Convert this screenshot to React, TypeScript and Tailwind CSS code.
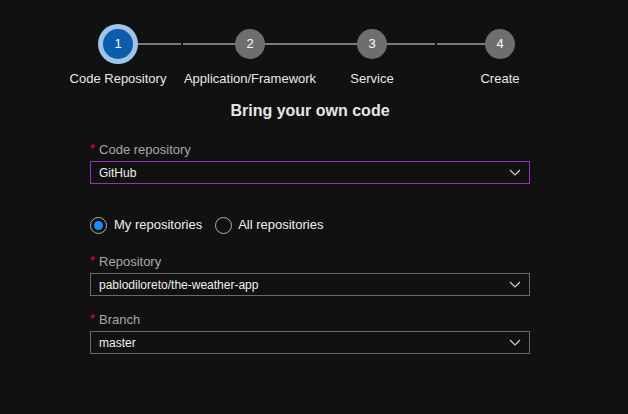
import React from 'react'

const font = { fontFamily: '"Liberation Sans", Arial, sans-serif' }

function Chevron() {
  return (
    <svg width="12" height="7" viewBox="0 0 12 7" className="text-[#d0d0d0]">
      <polyline points="1,1 6,6 11,1" fill="none" stroke="currentColor" strokeWidth="1.2" />
    </svg>
  )
}

function Field({ label, value, focused }: { label: string; value: string; focused?: boolean }) {
  return (
    <div className="flex flex-col">
      <div className="flex items-center gap-[4px] h-[18px] text-[13px] text-[#a8a8a8]">
        <span className="text-[#e0102a] text-[13px] mt-[-2px]">*</span>
        <span>{label}</span>
      </div>
      <div
        className={
          focused
            ? 'mt-[2px] h-[23px] border border-[#9a30b6] flex items-center justify-between pl-[8px] pr-[8px]'
            : 'mt-[2px] h-[23px] border border-[#6a6a6a] flex items-center justify-between pl-[8px] pr-[8px]'
        }
      >
        <span className="text-[12px] text-[#f0f0f0]">{value}</span>
        <Chevron />
      </div>
    </div>
  )
}

export default function App() {
  return (
    <div className="w-[628px] h-[414px] bg-[#111111] overflow-hidden" style={font}>
      {/* Stepper */}
      <div className="flex items-center pt-[24px] pl-[98px]">
        <div className="w-[40px] h-[40px] rounded-full bg-[#a0c4e8] flex items-center justify-center">
          <div className="w-[30px] h-[30px] rounded-full bg-[#0b5cab] flex items-center justify-center text-white text-[13px]">1</div>
        </div>
        <div className="w-[43px] h-[2px] bg-[#7a7a7a]" />
        <div className="w-[2px]" />
        <div className="w-[52px] h-[2px] bg-[#7a7a7a]" />
        <div className="w-[30px] h-[30px] rounded-full bg-[#6e6e6e] flex items-center justify-center text-white text-[13px]">2</div>
        <div className="w-[92px] h-[2px] bg-[#7a7a7a]" />
        <div className="w-[30px] h-[30px] rounded-full bg-[#6e6e6e] flex items-center justify-center text-white text-[13px]">3</div>
        <div className="w-[48px] h-[2px] bg-[#7a7a7a]" />
        <div className="w-[2px]" />
        <div className="w-[48px] h-[2px] bg-[#7a7a7a]" />
        <div className="w-[30px] h-[30px] rounded-full bg-[#6e6e6e] flex items-center justify-center text-white text-[13px]">4</div>
      </div>
      <div className="flex pl-[52px] mt-[6px] text-[13px] text-[#e8e8e8] h-[18px] items-center">
        <div className="w-[132px] flex justify-center whitespace-nowrap">Code Repository</div>
        <div className="w-[132px] flex justify-center whitespace-nowrap">Application/Framework</div>
        <div className="w-[112px] flex justify-center whitespace-nowrap">Service</div>
        <div className="w-[144px] flex justify-center whitespace-nowrap">Create</div>
      </div>

      <div className="mt-[11px] pr-[8px] text-center text-[16px] font-bold text-[#e6e6e6]">Bring your own code</div>

      {/* Form */}
      <div className="w-[440px] ml-[90px] mt-[18px] flex flex-col">
        <Field label="Code repository" value="GitHub" focused />

        <div className="flex items-center mt-[31px] h-[20px] text-[13px] text-[#f0f0f0]">
          <div className="w-[17px] h-[17px] rounded-full border border-[#b0b0b0] flex items-center justify-center">
            <div className="w-[9px] h-[9px] rounded-full bg-[#1a8cff]" />
          </div>
          <span className="ml-[7px]">My repositories</span>
          <div className="ml-[13px] w-[17px] h-[17px] rounded-full border border-[#b0b0b0]" />
          <span className="ml-[6px]">All repositories</span>
        </div>

        <div className="mt-[18px]">
          <Field label="Repository" value="pablodiloreto/the-weather-app" />
        </div>
        <div className="mt-[15px]">
          <Field label="Branch" value="master" />
        </div>
      </div>
    </div>
  )
}
